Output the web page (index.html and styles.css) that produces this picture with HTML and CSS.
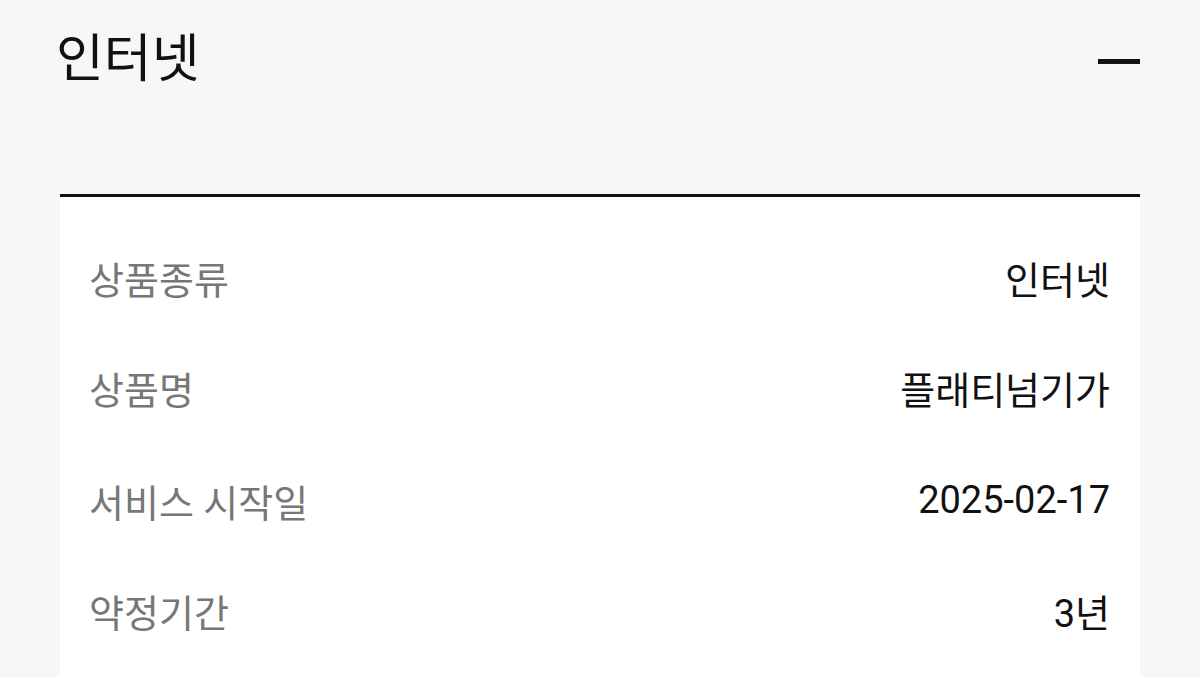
FILE: index.html
```html
<!DOCTYPE html>
<html lang="ko">
<head>
<meta charset="utf-8">
<link rel="stylesheet" href="styles.css">
</head>
<body>
<div class="page">
  <header class="head">
    <h1 class="title">인터넷</h1>
    <span class="minus" aria-label="접기"></span>
  </header>
  <section class="card">
    <div class="row"><span class="label">상품종류</span><span class="value">인터넷</span></div>
    <div class="row"><span class="label">상품명</span><span class="value">플래티넘기가</span></div>
    <div class="row"><span class="label">서비스 시작일</span><span class="value">2025-02-17</span></div>
    <div class="row"><span class="label">약정기간</span><span class="value">3년</span></div>
  </section>
</div>
</body>
</html>
```

FILE: styles.css
```css
html, body {
  margin: 0;
  padding: 0;
  background: #f7f7f7;
  font-family: Roboto, "Noto Sans CJK KR", "Noto Sans", sans-serif;
  color: #111;
}
.page {
  padding: 0 60px;
  height: 677px;
  overflow: hidden;
}
.head {
  height: 194px;
  display: flex;
  justify-content: space-between;
  align-items: flex-start;
  border-bottom: 3px solid #111;
}
.title {
  margin: 24px 0 0 -4px;
  font-size: 52px;
  font-weight: 400;
  line-height: 72px;
}
.minus {
  width: 42px;
  height: 5px;
  background: #111;
  margin-top: 59px;
}
.card {
  background: #fff;
  padding: 25px 30px 0 29px;
  min-height: 600px;
}
.row {
  height: 110px;
  display: flex;
  justify-content: space-between;
  align-items: center;
  font-size: 38px;
}
.row:nth-child(n+3) {
  padding-top: 3px;
}
.row:nth-child(n+3) + .row {
  padding-top: 0;
}
.label {
  color: #777;
}
.value {
  color: #111;
}
```
